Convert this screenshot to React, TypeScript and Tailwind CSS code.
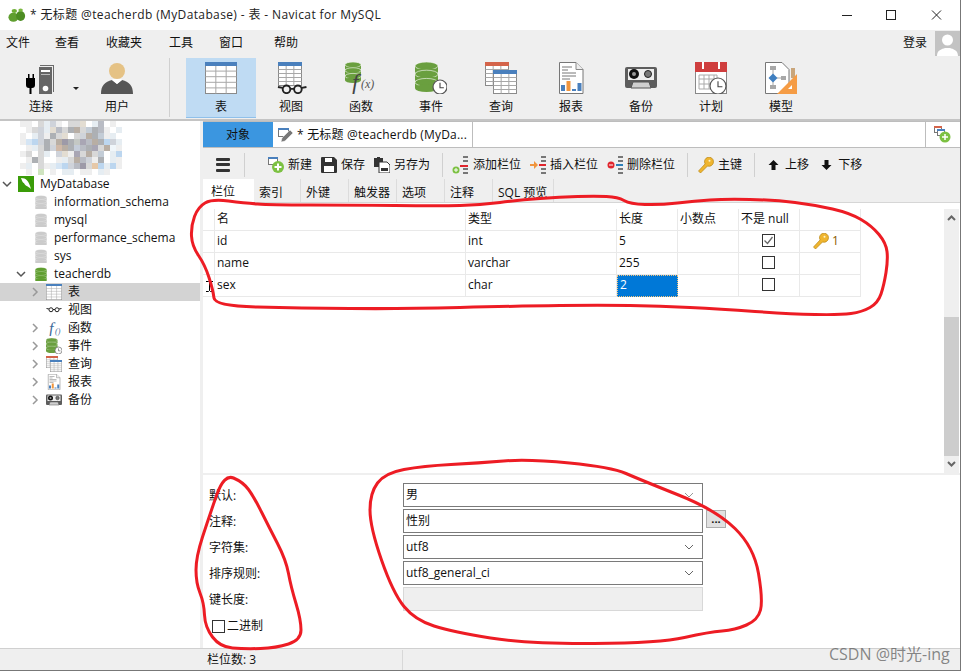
import type { ReactNode } from "react";

const GRID = "#8a8a8a";

function Svg({ size = 32, children }: { size?: number; children: ReactNode }) {
  return (
    <svg width={size} height={size} viewBox="0 0 32 32" className="shrink-0">
      {children}
    </svg>
  );
}

function TableGrid({ x, y, w, h, bar = "#4a80bd" }: { x: number; y: number; w: number; h: number; bar?: string }) {
  const cols = [1, 2].map((i) => x + (w * i) / 3);
  const rows = [1, 2, 3, 4].map((i) => y + 3 + ((h - 3) * i) / 5);
  return (
    <g>
      <rect x={x} y={y} width={w} height={h} fill="#fff" stroke={GRID} strokeWidth="1" />
      {cols.map((c) => (
        <line key={c} x1={c} x2={c} y1={y} y2={y + h} stroke="#a8a8a8" strokeWidth="1" />
      ))}
      {rows.map((r) => (
        <line key={r} x1={x} x2={x + w} y1={r} y2={r} stroke="#a8a8a8" strokeWidth="1" />
      ))}
      <rect x={x - 0.5} y={y - 0.5} width={w + 1} height="4" fill={bar} />
    </g>
  );
}

function Db({ x = 0, y = 0, w = 16, color = "#6a9f3f", n = 3 }: { x?: number; y?: number; w?: number; color?: string; n?: number }) {
  const h = w * 0.34;
  return (
    <g>
      {Array.from({ length: n }).map((_, i) => (
        <g key={i}>
          <rect x={x} y={y + h / 2 + i * h * 1.05} width={w} height={h * 0.75} fill={color} />
          <ellipse cx={x + w / 2} cy={y + h / 2 + i * h * 1.05} rx={w / 2} ry={h / 2} fill={color} stroke="#fff" strokeWidth="0.6" />
          <ellipse cx={x + w / 2} cy={y + h * 1.25 + i * h * 1.05} rx={w / 2} ry={h / 2} fill={color} />
        </g>
      ))}
    </g>
  );
}

function Clock({ cx, cy, r }: { cx: number; cy: number; r: number }) {
  return (
    <g>
      <circle cx={cx} cy={cy} r={r} fill="#fff" stroke="#555" strokeWidth="1.2" />
      <path d={`M${cx} ${cy - r * 0.6}V${cy + r * 0.1}H${cx + r * 0.55}`} fill="none" stroke="#444" strokeWidth="1.1" />
    </g>
  );
}

function Glasses({ x = 3, y = 24, s = 1 }: { x?: number; y?: number; s?: number }) {
  return (
    <g transform={`translate(${x} ${y}) scale(${s})`} fill="none" stroke="#222" strokeWidth="2">
      <circle cx="10" cy="3.5" r="4" />
      <circle cx="22" cy="3.5" r="4" />
      <path d="M14 3h4M6 2L1 1M26 2l5-1" />
    </g>
  );
}

function ConnectIcon({ size }: { size?: number }) {
  return (
    <Svg size={size}>
      <path d="M15 3h14v27h-1V4H15z" fill="#6b6b6b" />
      <rect x="14" y="5" width="13" height="27" fill="#666" />
      <rect x="16" y="8" width="9" height="2" fill="#fff" />
      <rect x="16" y="12" width="9" height="1" fill="#bbb" />
      <circle cx="20.5" cy="26.5" r="2.8" fill="#fff" />
      <path d="M1 16h2v-4h1.500v4h3v-4H9v4h1v7a3 3 0 0 1-3 3H6.500v6H4.500v-6H4a3 3 0 0 1-3-3z" fill="#000" />
    </Svg>
  );
}

function UserIcon({ size }: { size?: number }) {
  return (
    <Svg size={size}>
      <circle cx="16" cy="9" r="8" fill="#e5c285" />
      <path d="M0 32c0-9 4-12 11-14l5 4 5-4c7 2 11 5 11 14z" fill="#565656" />
      <path d="M11 18l5 4 5-4-1-1h-8z" fill="#fff" />
    </Svg>
  );
}

function TableIcon({ size }: { size?: number }) {
  return (
    <Svg size={size}>
      <TableGrid x={0.5} y={0.5} w={31} h={31} />
    </Svg>
  );
}

function ViewIcon() {
  return (
    <Svg>
      <TableGrid x={3.5} y={0.5} w={23} h={23} />
      <Glasses x={2} y={24} s={0.95} />
    </Svg>
  );
}

function FuncIcon() {
  return (
    <Svg>
      <Db x={0} y={0} w={16} />
      <text x="7" y="28" fontFamily="Liberation Serif" fontStyle="italic" fontSize="23" fill="#444">f</text>
      <text x="16" y="26" fontFamily="Liberation Serif" fontStyle="italic" fontSize="12" fill="#555">(x)</text>
    </Svg>
  );
}

function EventIcon({ size }: { size?: number }) {
  return (
    <Svg size={size}>
      <Db x={0} y={0} w={23} />
      <Clock cx={25} cy={25} r={7} />
    </Svg>
  );
}

function QueryIcon({ size }: { size?: number }) {
  return (
    <Svg size={size}>
      <TableGrid x={0.5} y={0.5} w={23} h={23} bar="#d4644a" />
      <TableGrid x={8.5} y={8.500} w={23} h={23} />
    </Svg>
  );
}

function ReportIcon({ size }: { size?: number }) {
  return (
    <Svg size={size}>
      <path d="M4.500.500H21l7 7v24H4.500z" fill="#fff" stroke="#777" />
      <path d="M21 .5v7h7" fill="#eee" stroke="#888" />
      <path d="M7 5h10M7 8h6M7 11h14M7 14h14M7 17h8" stroke="#777" />
      <rect x="6" y="23" width="4" height="6" fill="#4a80bd" />
      <rect x="11.500" y="19" width="4" height="10" fill="#f0953e" />
      <rect x="17" y="27" width="4" height="2" fill="#4a80bd" />
      <rect x="22.500" y="21" width="4" height="8" fill="#4a80bd" />
    </Svg>
  );
}

function BackupIcon({ size }: { size?: number }) {
  return (
    <Svg size={size}>
      <rect x="0" y="5" width="32" height="21" rx="2" fill="#5d5d5d" />
      <path d="M6 26l2-6h16l2 6z" fill="#cfcfcf" stroke="#555" />
      <rect x="3" y="7" width="26" height="11" fill="#eee" />
      <circle cx="9" cy="12" r="5" fill="#111" />
      <circle cx="9" cy="12" r="2" fill="#999" />
      <circle cx="23" cy="12" r="3.500" fill="#777" stroke="#222" />
    </Svg>
  );
}

function ScheduleIcon() {
  return (
    <Svg>
      <rect x="0.500" y="0.500" width="31" height="31" fill="#fff" stroke="#888" />
      <rect x="0" y="0" width="32" height="10" fill="#cf3e3e" />
      <rect x="7" y="0" width="2" height="7" fill="#fff" />
      <rect x="23" y="0" width="2" height="7" fill="#fff" />
      <path d="M4 13h18v14H4zM4 17h18M4 22h18M9 13v14M14 13v14M19 13v14" fill="none" stroke="#aaa" />
      <Clock cx={23} cy={24} r={8} />
    </Svg>
  );
}

function ModelIcon() {
  return (
    <Svg>
      <path d="M.5.5H17l7 7v24H.5z" fill="#fff" stroke="#777" />
      <rect x="5" y="4" width="6" height="4" fill="#a8a8a8" />
      <rect x="5" y="23" width="6" height="4" fill="#a8a8a8" />
      <rect x="16" y="14" width="5" height="4" fill="#a8a8a8" />
      <path d="M8 8v15M12 16h4" stroke="#a8a8a8" />
      <path d="M8 11.500l4.500 4.500-4.500 4.500-4.500-4.500z" fill="#3f7fc0" />
      <path d="M26 6h4v10h-4z" fill="#c9a57a" />
      <path d="M32 12v20H12z" fill="#f59c45" />
      <path d="M27 23v4h-4z" fill="#fff" />
    </Svg>
  );
}

function KeyIcon({ size = 16 }: { size?: number }) {
  return (
    <svg width={size} height={size} viewBox="0 0 16 16" className="shrink-0">
      <path d="M15.500 4.800a4.500 4.500 0 0 1-6 4.200L4 14.500 2.500 16 .5 14l6.600-7.100A4.500 4.500 0 1 1 15.500 4.800z" fill="#efb52f" stroke="#b98512" strokeWidth="0.7" />
      <circle cx="11.500" cy="3.800" r="1" fill="#fff3c4" />
    </svg>
  );
}

const mosaicRows = [
  "aa.bcda.bbe.cf.a..",
  ".abdcefbghbigfa.c.",
  "a.cdagbe.bdhgiac..",
  "ajkdgbhlgmnfhgkdc.",
  ".acbgdohgpfgnbhqa.",
  "ab.bc.deanbhbi.ck.",
  ".agb..acbhfdag.ca.",
  "ac.bacjkdflbrkcka.",
  ".a.t.a.cc.aa.ca...",
];
const mosaicColors: Record<string, string> = {
  a: "#eeeeee", b: "#d8d8d8", c: "#e6edf2", d: "#cfd3da", e: "#e3ddd2", f: "#b9bcc4", g: "#adb0b4", h: "#b8aea4",
  i: "#c3ccd6", j: "#d5e5f4", k: "#bcd6ef", l: "#9d9aa8", m: "#c4c8c4", n: "#a9a6b4", o: "#d0b9a8", p: "#c5cdd9",
  q: "#f0f6fa", r: "#e6c8a8", t: "#cfe4c0",
};

function Mosaic() {
  return (
    <svg width="116" height="54" viewBox="0 0 108 54" className="ml-[16px]">
      {mosaicRows.flatMap((row, y) =>
        row.split("").map((ch, x) =>
          ch === "." ? null : <rect key={`${x}-${y}`} x={x * 6} y={y * 6} width="6" height="6" fill={mosaicColors[ch]} />
        )
      )}
    </svg>
  );
}

function Chevron({ open, dim }: { open?: boolean; dim?: boolean }) {
  return (
    <svg width="10" height="10" viewBox="0 0 10 10" className="shrink-0">
      <path d={open ? "M1 3l4 4 4-4" : "M3 1l4 4-4 4"} fill="none" stroke={dim ? "#999" : "#555"} strokeWidth="1.500" />
    </svg>
  );
}

function SmallDb({ color }: { color: string }) {
  return (
    <Svg size={14}>
      <Db x={3} y={1} w={26} color={color} />
    </Svg>
  );
}

const menus = [
  { label: "文件", w: "w-[49px]" },
  { label: "查看", w: "w-[51px]" },
  { label: "收藏夹", w: "w-[63px]" },
  { label: "工具", w: "w-[50px]" },
  { label: "窗口", w: "w-[55px]" },
  { label: "帮助", w: "w-[40px]" },
];

const tools = [
  { label: "表", Icon: TableIcon, active: true },
  { label: "视图", Icon: ViewIcon },
  { label: "函数", Icon: FuncIcon },
  { label: "事件", Icon: EventIcon },
  { label: "查询", Icon: QueryIcon },
  { label: "报表", Icon: ReportIcon },
  { label: "备份", Icon: BackupIcon },
  { label: "计划", Icon: ScheduleIcon },
  { label: "模型", Icon: ModelIcon },
];

function ToolButton({ label, icon, active }: { label: string; icon: ReactNode; active?: boolean }) {
  return (
    <div className={`flex h-[60px] w-[70px] flex-col items-center pt-[4px] ${active ? "border-b border-[#8fc0ea] bg-[#bfdbf3]" : ""}`}>
      <div className="h-[32px]">{icon}</div>
      <div className="mt-[4px] leading-[18px]">{label}</div>
    </div>
  );
}

function TitleBar() {
  return (
    <div className="flex h-[30px] items-center bg-white pl-[8px]">
      <svg width="18" height="15" viewBox="0 0 20 16" className="shrink-0">
        <ellipse cx="6" cy="10" rx="5.500" ry="5" fill="#5f9e2f" />
        <ellipse cx="14" cy="8.500" rx="5" ry="5.500" fill="#4c8c22" />
        <ellipse cx="7" cy="3" rx="3" ry="2.200" fill="#6fae35" />
        <ellipse cx="14" cy="2" rx="2.500" ry="1.800" fill="#7bb83f" />
      </svg>
      <div className="ml-[4px] text-[12px] tracking-[0.37px] text-[#222]">* 无标题 @teacherdb (MyDatabase) - 表 - Navicat for MySQL</div>
      <svg width="110" height="14" viewBox="0 0 110 14" className="ml-auto mr-[9px]" fill="none" stroke="#222" strokeWidth="1">
        <path d="M1 7.500h10" />
        <rect x="45.500" y="2.500" width="9" height="9" />
        <path d="M91 2.500l9 9M100 2.500l-9 9" />
      </svg>
    </div>
  );
}

function MainToolbar() {
  return (
    <div className="h-[91px] border-b-2 border-[#c4c4c4] bg-[#efefef]">
      <div className="flex h-[26px] items-center pl-[6px]">
        {menus.map((m) => (
          <div key={m.label} className={m.w}>
            {m.label}
          </div>
        ))}
        <div className="ml-auto mr-[8px]">登录</div>
        <svg width="25" height="25" viewBox="0 0 25 25" className="shrink-0">
          <rect width="25" height="25" fill="#c3c3c3" />
          <circle cx="12.500" cy="9" r="5.500" fill="#fff" />
          <path d="M2 25c0-6 5-7 8-8h5c3 1 8 2 8 8z" fill="#fff" />
        </svg>
      </div>
      <div className="flex h-[63px] items-start pt-[2px]">
        <div className="relative ml-[6px]">
          <ToolButton label="连接" icon={<ConnectIcon />} />
          <div className="absolute left-[67px] top-[29px] h-0 w-0 border-x-[3px] border-t-[3px] border-x-transparent border-t-[#222]" />
        </div>
        <div className="ml-[6px]">
          <ToolButton label="用户" icon={<UserIcon />} />
        </div>
        <div className="ml-[17px] h-[59px] w-px bg-[#d0d0d0]" />
        <div className="ml-[16px] flex">
          {tools.map((t) => (
            <ToolButton key={t.label} label={t.label} icon={<t.Icon />} active={t.active} />
          ))}
        </div>
      </div>
    </div>
  );
}

const treeDbs = [
  { name: "information_schema" },
  { name: "mysql" },
  { name: "performance_schema" },
  { name: "sys" },
];

const treeItems = [
  { label: "表", icon: <TableIcon size={16} />, selected: true, chevron: true },
  { label: "视图", icon: <Svg size={16}><Glasses x={0} y={12} s={1} /></Svg> },
  {
    label: "函数",
    chevron: true,
    icon: (
      <Svg size={16}>
        <text x="6" y="28" fontFamily="Liberation Serif" fontStyle="italic" fontSize="32" fill="#3f6a9a">f</text>
        <text x="18" y="27" fontFamily="Liberation Serif" fontStyle="italic" fontSize="16" fill="#3f6a9a">()</text>
      </Svg>
    ),
  },
  { label: "事件", chevron: true, icon: <EventIcon size={16} /> },
  { label: "查询", chevron: true, icon: <QueryIcon size={16} /> },
  { label: "报表", chevron: true, icon: <ReportIcon size={16} /> },
  { label: "备份", chevron: true, icon: <BackupIcon size={16} /> },
];

function Sidebar() {
  return (
    <div className="w-[200px] shrink-0 bg-white">
      <Mosaic />
      <div className="flex h-[18px] items-center pl-[2px]">
        <Chevron open />
        <svg width="16" height="16" viewBox="0 0 16 16" className="ml-[6px] shrink-0">
          <rect width="16" height="16" fill="#3a9c08" />
          <path d="M3 2c5 0 8 3 10 11-3-3-6-3-7-6-1 0-2-2-3-5z" fill="#fff" />
        </svg>
        <span className="ml-[6px]">MyDatabase</span>
      </div>
      {treeDbs.map((d) => (
        <div key={d.name} className="flex h-[18px] items-center pl-[34px]">
          <SmallDb color="#cbcbcb" />
          <span className="ml-[6px]">{d.name}</span>
        </div>
      ))}
      <div className="flex h-[18px] items-center pl-[16px]">
        <Chevron open />
        <span className="ml-[8px]"><SmallDb color="#5f9e2f" /></span>
        <span className="ml-[6px]">teacherdb</span>
      </div>
      {treeItems.map((t) => (
        <div key={t.label} className={`flex h-[18px] items-center pl-[30px] ${t.selected ? "bg-[#d3d3d3]" : ""}`}>
          {t.chevron ? <Chevron dim /> : <span className="w-[10px]" />}
          <span className="ml-[6px]">{t.icon}</span>
          <span className="ml-[6px]">{t.label}</span>
        </div>
      ))}
    </div>
  );
}

function ActionIcon({ kind }: { kind: string }) {
  if (kind === "new")
    return (
      <svg width="16" height="16" viewBox="0 0 16 16" className="shrink-0">
        <rect x="0.500" y="0.500" width="9" height="7" fill="#fff" stroke="#777" />
        <rect x="0" y="0" width="10" height="2" fill="#4a80bd" />
        <circle cx="10" cy="10" r="6" fill="#7cc142" />
        <path d="M10 6.500v7M6.500 10h7" stroke="#fff" strokeWidth="2" />
      </svg>
    );
  if (kind === "save")
    return (
      <svg width="16" height="16" viewBox="0 0 16 16" className="shrink-0">
        <path d="M0 1a1 1 0 0 1 1-1h12l3 3v12a1 1 0 0 1-1 1H1a1 1 0 0 1-1-1z" fill="#333" />
        <rect x="4" y="1" width="7" height="4" fill="#fff" />
        <rect x="3" y="9" width="10" height="6" fill="#fff" />
      </svg>
    );
  if (kind === "saveas")
    return (
      <svg width="16" height="16" viewBox="0 0 16 16" className="shrink-0">
        <path d="M0 1h3V0h3v1h3v9H0z" fill="#333" />
        <path d="M5 5h8l3 3v8H5z" fill="#fff" stroke="#333" />
        <rect x="7" y="11" width="7" height="3" fill="#333" />
      </svg>
    );
  const bars = <path d="M11 1h5M11 5h5M11 13h5M11 17h5" stroke="#777" strokeWidth="2" />;
  if (kind === "add")
    return (
      <svg width="18" height="18" viewBox="0 0 18 18" className="shrink-0">
        {bars}
        <rect x="8" y="9" width="8" height="2" fill="#e0252d" />
        <circle cx="4" cy="14" r="3.500" fill="#7cc142" />
        <path d="M4 12v4M2 14h4" stroke="#fff" />
      </svg>
    );
  if (kind === "insert")
    return (
      <svg width="18" height="18" viewBox="0 0 18 18" className="shrink-0">
        {bars}
        <rect x="9" y="8" width="7" height="2" fill="#e0252d" />
        <path d="M0 8h4V5l4 4-4 4v-3H0z" fill="#f0953e" />
      </svg>
    );
  return (
    <svg width="18" height="18" viewBox="0 0 18 18" className="shrink-0">
      <path d="M11 1h5M11 5h5M11 13h5M11 17h5" stroke="#777" strokeWidth="2" />
      <rect x="9" y="8" width="7" height="2" fill="#2d7fb8" />
      <circle cx="4" cy="9" r="3.500" fill="#e0252d" />
      <path d="M2 9h4" stroke="#fff" />
    </svg>
  );
}

function Sep({ className }: { className: string }) {
  return <div className={`h-[24px] w-px bg-[#d0d0d0] ${className}`} />;
}

function Action({ icon, label, className }: { icon: ReactNode; label: string; className: string }) {
  return (
    <div className={`flex items-center ${className}`}>
      {icon}
      <span>{label}</span>
    </div>
  );
}

function Arrow({ up }: { up?: boolean }) {
  return (
    <svg width="11" height="12" viewBox="0 0 11 12" className={up ? "shrink-0" : "shrink-0 rotate-180"}>
      <path d="M5.500 1l5 5H7.500v5h-4V6H.5z" fill="#111" />
    </svg>
  );
}

function TableToolbar() {
  return (
    <div className="flex h-[31px] items-center bg-[#efefef] pt-[2px]">
      <div className="ml-[13px] flex h-[14px] w-[14px] flex-col justify-between">
        <div className="h-[3px] rounded-[1px] bg-[#333]" />
        <div className="h-[3px] rounded-[1px] bg-[#333]" />
        <div className="h-[3px] rounded-[1px] bg-[#333]" />
      </div>
      <Sep className="ml-[14px]" />
      <Action className="ml-[23px] gap-[4px]" icon={<ActionIcon kind="new" />} label="新建" />
      <Action className="ml-[9px] gap-[4px]" icon={<ActionIcon kind="save" />} label="保存" />
      <Action className="ml-[9px] gap-[4px]" icon={<ActionIcon kind="saveas" />} label="另存为" />
      <Sep className="ml-[12px]" />
      <Action className="ml-[9px] gap-[3px]" icon={<ActionIcon kind="add" />} label="添加栏位" />
      <Action className="ml-[9px] gap-[2px]" icon={<ActionIcon kind="insert" />} label="插入栏位" />
      <Action className="ml-[9px] gap-[2px]" icon={<ActionIcon kind="delete" />} label="删除栏位" />
      <Sep className="ml-[12px]" />
      <Action className="ml-[10px] gap-[4px]" icon={<KeyIcon />} label="主键" />
      <Sep className="ml-[12px]" />
      <Action className="ml-[13px] gap-[6px]" icon={<Arrow up />} label="上移" />
      <Action className="ml-[12px] gap-[6px]" icon={<Arrow />} label="下移" />
    </div>
  );
}

const subTabs = [
  { label: "索引", w: "w-[47px]" },
  { label: "外键", w: "w-[48px]" },
  { label: "触发器", w: "w-[48px]" },
  { label: "选项", w: "w-[48px]" },
  { label: "注释", w: "w-[48px]" },
  { label: "SQL 预览", w: "w-[61px]" },
];

function SubTabs() {
  return (
    <div className="flex h-[24px] border-b border-[#d6d6d6] bg-[#efefef]">
      <div className="h-[24px] w-[51px] bg-white pl-[8px] leading-[25px]">栏位</div>
      {subTabs.map((t) => (
        <div key={t.label} className={`${t.w} overflow-hidden whitespace-nowrap border-r border-[#dcdcdc] pl-[5px] pt-[3px] leading-[22px]`}>
          {t.label}
        </div>
      ))}
    </div>
  );
}

const columns = "grid-cols-[12px_251px_151px_61px_61px_61px_61px]";

function Cell({ children, className = "" }: { children?: ReactNode; className?: string }) {
  return (
    <div className={`flex h-[22px] items-center border-b border-r border-[#e9e9e9] pb-[2px] pl-[2px] ${className}`}>
      {children}
    </div>
  );
}

function Check({ checked }: { checked?: boolean }) {
  return (
    <div className="flex h-[13px] w-[13px] items-center justify-center border border-[#333] bg-white">
      {checked && (
        <svg width="11" height="11" viewBox="0 0 11 11">
          <path d="M1.500 5.500l3 3 5-6.500" fill="none" stroke="#666" strokeWidth="1.300" />
        </svg>
      )}
    </div>
  );
}

const rows = [
  { name: "id", type: "int", len: "5", notNull: true, key: true },
  { name: "name", type: "varchar", len: "255" },
  { name: "sex", type: "char", len: "2", selected: true },
];

function FieldGrid() {
  return (
    <div className="relative h-[270px] bg-white pt-[6px]">
      <div className={`grid w-[658px] ${columns}`}>
        <Cell />
        <Cell>名</Cell>
        <Cell>类型</Cell>
        <Cell>长度</Cell>
        <Cell>小数点</Cell>
        <Cell>不是 null</Cell>
        <Cell />
        {rows.map((r) => (
          <div key={r.name} className="contents">
            <Cell />
            <Cell>{r.name}</Cell>
            <Cell>{r.type}</Cell>
            {r.selected ? (
              <Cell className="border border-dotted border-[#f4c27a] bg-[#0078d7] text-white">{r.len}</Cell>
            ) : (
              <Cell>{r.len}</Cell>
            )}
            <Cell />
            <Cell className="justify-center pl-0 pr-[4px]">
              <Check checked={r.notNull} />
            </Cell>
            <Cell className={r.key ? "pl-[13px] text-[#8a5a00]" : ""}>
              {r.key && (
                <>
                  <KeyIcon />
                  <span className="ml-[3px]">1</span>
                </>
              )}
            </Cell>
          </div>
        ))}
      </div>
      {/* text cursor over the row header */}
      <svg width="7" height="11" viewBox="0 0 7 11" className="absolute left-[3px] top-[78px]">
        <path d="M0 .5h2.500L3.500 1.500 4.500.5H7M3.500 1.500v8M0 10.500h2.500l1-1 1 1H7" fill="none" stroke="#000" />
      </svg>
      <div className="absolute bottom-0 right-[1px] top-[6px] flex w-[15px] flex-col items-center justify-between bg-[#efefef] py-[6px]">
        <svg width="9" height="6" viewBox="0 0 9 6"><path d="M1 5l3.500-3.500L8 5" fill="none" stroke="#666" strokeWidth="2" /></svg>
        <svg width="9" height="6" viewBox="0 0 9 6"><path d="M1 1l3.500 3.500L8 1" fill="none" stroke="#666" strokeWidth="2" /></svg>
      </div>
      <div className="absolute right-[1px] top-[114px] h-[139px] w-[15px] bg-[#cdcdcd]" />
    </div>
  );
}

function Field({ children, arrow, disabled, faintArrow }: { children?: ReactNode; arrow?: boolean; disabled?: boolean; faintArrow?: boolean }) {
  return (
    <div
      className={`flex h-[24px] w-[300px] items-center border pl-[2px] pr-[8px] ${
        disabled ? "border-[#d8d8d8] bg-[#efefef]" : "border-[#7a7a7a] bg-white"
      }`}
    >
      <span>{children}</span>
      {arrow && (
        <svg width="10" height="6" viewBox="0 0 10 6" className="ml-auto">
          <path d="M1 1l4 4 4-4" fill="none" stroke={faintArrow ? "#999" : "#666"} />
        </svg>
      )}
    </div>
  );
}

const formLabels = ["默认:", "注释:", "字符集:", "排序规则:", "键长度:"];

function FormPanel() {
  return (
    <div className="flex h-[174px] border-t-2 border-[#efefef] bg-white pl-[6px] pt-[8px]">
      <div className="w-[194px]">
        {formLabels.map((l) => (
          <div key={l} className="flex h-[26px] items-center">
            {l}
          </div>
        ))}
        <div className="flex h-[26px] items-center pl-[3px]">
          <div className="h-[13px] w-[13px] border border-[#333]" />
          <span className="ml-[2px]">二进制</span>
        </div>
      </div>
      <div className="flex flex-col gap-[2px]">
        <Field arrow faintArrow>男</Field>
        <div className="relative">
          <Field>性别</Field>
          <div className="absolute left-[303px] top-[1px] flex h-[18px] w-[20px] items-center justify-center border border-[#adadad] bg-[#e1e1e1] text-[11px] font-bold leading-[12px]">...</div>
        </div>
        <Field arrow>utf8</Field>
        <Field arrow>utf8_general_ci</Field>
        <Field disabled />
      </div>
    </div>
  );
}

// turn a handful of points into a smooth closed pen stroke
function loop(points: number[][]) {
  const mid = (a: number[], b: number[]) => [(a[0] + b[0]) / 2, (a[1] + b[1]) / 2];
  const start = mid(points[points.length - 1], points[0]);
  let d = `M${start[0]} ${start[1]}`;
  points.forEach((p, i) => {
    const m = mid(p, points[(i + 1) % points.length]);
    d += `Q${p[0]} ${p[1]} ${m[0]} ${m[1]}`;
  });
  return d + "Z";
}

const tableLoop = [
  [212, 199], [198, 207], [191, 226], [192, 246], [205, 265], [213, 290], [215, 306], [300, 308], [400, 309], [520, 306],
  [600, 305], [660, 306], [720, 309], [790, 314], [840, 315], [862, 312], [878, 303], [884, 285], [888, 260], [886, 243],
  [872, 226], [850, 213], [815, 205], [775, 200], [725, 199], [695, 201], [660, 205], [630, 204], [618, 197], [595, 196],
  [560, 197], [520, 200], [480, 205], [440, 206], [350, 205], [270, 205], [245, 203],
];
const leftLoop = [
  [224, 474], [243, 482], [254, 497], [269, 527], [286, 560], [291, 587], [301, 620], [301, 640], [276, 648], [245, 649],
  [220, 647], [205, 627], [204, 603], [196, 583], [196, 557], [209, 517],
];
const rightLoop = [
  [479, 463], [528, 459], [611, 467], [641, 480], [716, 510], [754, 547], [763, 600], [758, 620], [735, 630], [709, 632],
  [660, 643], [528, 644], [453, 632], [415, 620], [393, 593], [370, 527], [370, 493], [385, 473], [423, 466],
];

function Annotations() {
  return (
    <svg width="962" height="672" viewBox="0 0 962 672" className="pointer-events-none absolute left-0 top-0">
      {[tableLoop, leftLoop, rightLoop].map((pts, i) => (
        <path key={i} d={loop(pts)} fill="none" stroke="#ed1c24" strokeWidth="3" />
      ))}
    </svg>
  );
}

export default function App() {
  return (
    <div className="relative h-[672px] w-[962px] overflow-hidden bg-white font-['Open_Sans','Noto_Sans_CJK_SC',sans-serif] text-[12px] text-[#111]">
      <div className="flex h-[671px] w-[961px] flex-col border-b border-r border-[#777]">
        <TitleBar />
        <MainToolbar />
        <div className="flex h-[527px]">
          <Sidebar />
          <div className="w-[3px] shrink-0 bg-[#efefef]" />
          <div className="flex min-w-0 flex-1 flex-col">
            <div className="flex h-[27px] border-y border-[#bdbdbd] bg-white">
              <div className="flex w-[70px] items-center justify-center bg-[#3b96e0] text-[#111]">对象</div>
              <div className="flex w-[200px] items-center border-r border-[#bdbdbd] bg-white pl-[5px]">
                <svg width="16" height="16" viewBox="0 0 16 16" className="shrink-0">
                  <rect x="0.500" y="1.500" width="10" height="8" fill="#fff" stroke="#777" />
                  <rect x="0" y="1" width="11" height="2" fill="#4a80bd" />
                  <path d="M3 15l1-4 8-8 3 3-8 8z" fill="#777" stroke="#fff" strokeWidth="0.500" />
                </svg>
                <span className="ml-[3px] whitespace-nowrap tracking-[0.2px]">* 无标题 @teacherdb (MyDa...</span>
              </div>
              <div className="ml-auto flex w-[35px] items-center border-l border-[#bdbdbd] pl-[8px]">
                <svg width="17" height="17" viewBox="0 0 17 17">
                  <rect x="0.500" y="0.500" width="7" height="6" fill="#fff" stroke="#777" />
                  <rect x="0" y="0" width="8" height="2" fill="#d4644a" />
                  <rect x="3.500" y="3.500" width="7" height="6" fill="#fff" stroke="#777" />
                  <rect x="3" y="3" width="8" height="2" fill="#4a80bd" />
                  <circle cx="11" cy="11" r="5.500" fill="#7cc142" />
                  <path d="M11 8v6M8 11h6" stroke="#fff" strokeWidth="1.500" />
                </svg>
              </div>
            </div>
            <TableToolbar />
            <SubTabs />
            <FieldGrid />
            <FormPanel />
          </div>
        </div>
        <div className="flex h-[22px] items-center border-t border-[#d0d0d0] bg-[#efefef] pl-[207px]">
          <div className="flex h-[20px] w-[196px] items-center border-r border-[#d8d8d8]">栏位数: 3</div>
        </div>
      </div>
      <Annotations />
      <div className="absolute left-[829px] top-[644px] text-[16px] leading-[20px] text-[#555]/70">CSDN @时光-ing</div>
    </div>
  );
}
